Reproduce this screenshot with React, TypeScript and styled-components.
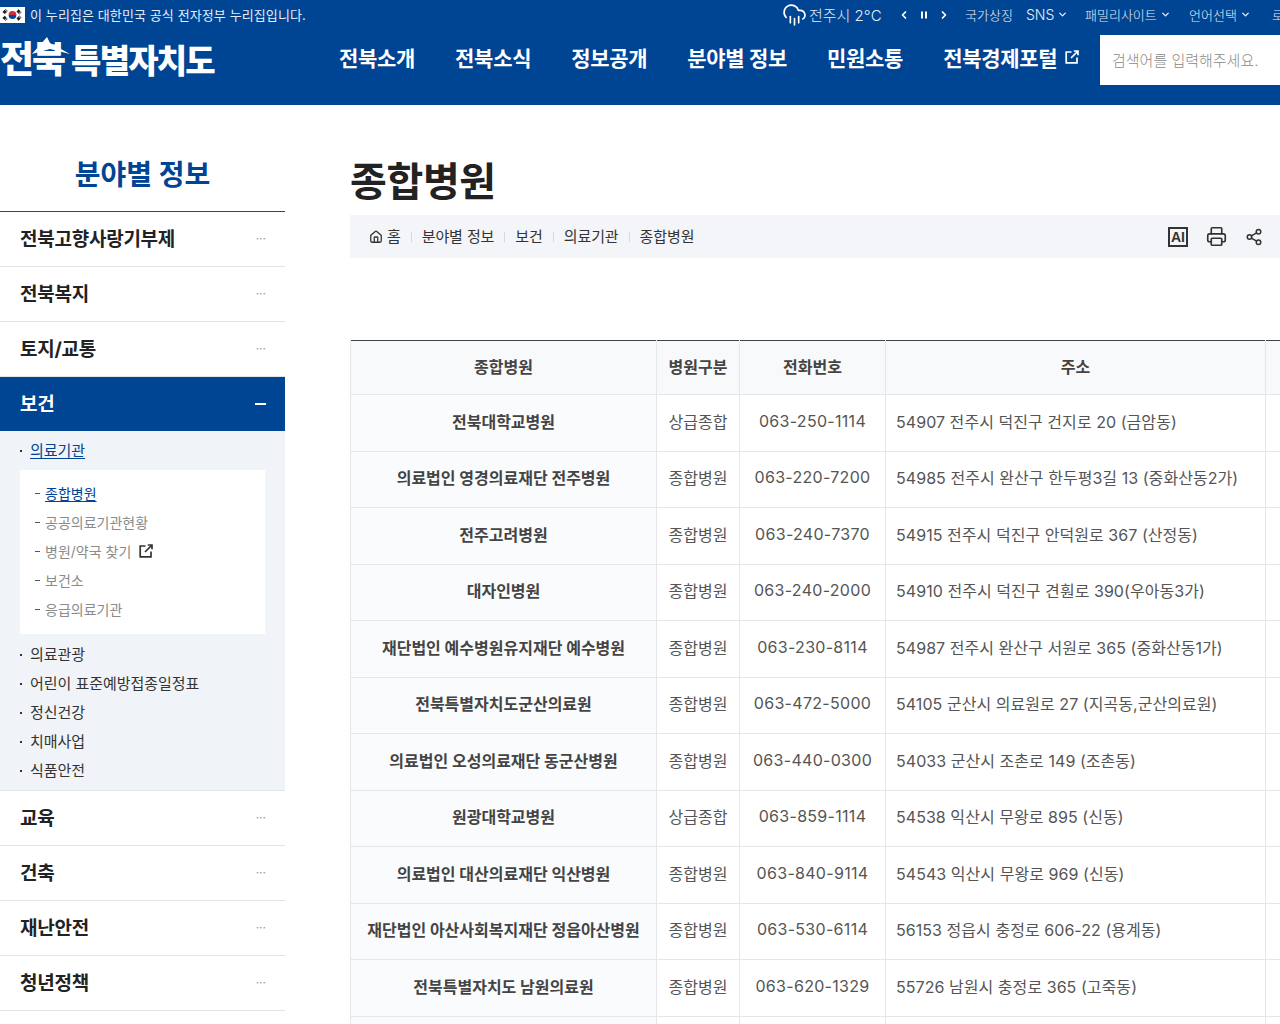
import React from "react";
import styled, { createGlobalStyle } from "styled-components";
import { ChevronLeft, ChevronRight, ChevronDown, CloudRain, Printer, Share2, House } from "lucide-react";

const Global = createGlobalStyle`
  html, body { margin: 0; padding: 0; width: 1280px; height: 1024px; overflow: hidden; background: #fff; }
  body { font-family: Inter, "Noto Sans CJK KR", "Noto Sans", sans-serif; color: #222; }
  * { box-sizing: border-box; }
  a { color: inherit; text-decoration: none; }
  ul { list-style: none; margin: 0; padding: 0; }
`;

const Page = styled.div`
  width: 1280px;
  height: 1024px;
  overflow: hidden;
`;
const Header = styled.header`
  height: 105px;
  background: #004494;
  color: #fff;
`;
const TopBar = styled.div`
  height: 35px;
  padding-bottom: 6px;
  display: flex;
  align-items: center;
  white-space: nowrap;
`;
const GovNotice = styled.div`
  display: flex;
  align-items: center;
  gap: 5px;
  font-size: 13px;
  letter-spacing: 0.1px;
  color: #e6edf7;
  width: 782px;
  flex: none;
`;
const Weather = styled.div`
  display: flex;
  align-items: center;
  gap: 2px;
  font-size: 15px;
  color: #e6edf7;
  width: 116px;
  flex: none;
  font-weight: 300;
`;
const Controls = styled.div`
  display: flex;
  align-items: center;
  gap: 8px;
  width: 67px;
  flex: none;
`;
const TopLink = styled.a<{ $w: number; $large?: boolean }>`
  display: flex;
  align-items: center;
  gap: 3px;
  width: ${(p) => p.$w}px;
  flex: none;
  font-size: ${(p) => (p.$large ? 14 : 13)}px;
  color: #e6edf7;
  font-weight: 300;
`;
const MainBar = styled.div`
  height: 70px;
  display: flex;
  align-items: flex-start;
`;
const Logo = styled.a`
  position: relative;
  display: flex;
  align-items: baseline;
  width: 339px;
  flex: none;
  height: 50px;
  font-weight: 900;
  color: #fff;
  white-space: nowrap;
`;
const LogoBig = styled.span`
  font-size: 37px;
  line-height: 50px;
  letter-spacing: -2px;
  margin-right: 7px;
`;
const LogoRest = styled.span`
  font-size: 33px;
  line-height: 50px;
  letter-spacing: -1.8px;
`;
const LogoWing = styled.svg`
  position: absolute;
  left: 32px;
  top: 2px;
`;
const Nav = styled.nav`
  display: flex;
  gap: 40px;
  width: 761px;
  flex: none;
  height: 50px;
  padding-bottom: 6px;
  align-items: center;
`;
const NavItem = styled.a`
  display: flex;
  align-items: center;
  gap: 8px;
  font-size: 21px;
  font-weight: 700;
  white-space: nowrap;
  letter-spacing: -0.3px;
`;
const Search = styled.div`
  width: 180px;
  height: 50px;
  flex: none;
  background: #fff;
  color: #8a8a8a;
  font-size: 15px;
  display: flex;
  align-items: center;
  padding: 0 0 2px 12px;
  font-weight: 300;
  white-space: nowrap;
`;
const Body = styled.div`
  display: flex;
  gap: 65px;
`;
const Side = styled.aside`
  width: 285px;
  flex: none;
`;
const SideTitle = styled.h2`
  margin: 0;
  height: 107px;
  border-bottom: 1px solid #444;
  display: flex;
  align-items: center;
  justify-content: center;
  padding-top: 29px;
  font-size: 28px;
  font-weight: 700;
  color: #004494;
`;
const SideItem = styled.a<{ $active?: boolean }>`
  display: flex;
  align-items: center;
  justify-content: space-between;
  height: ${(p) => (p.$active ? 54 : 55)}px;
  padding: 0 19px 4px 20px;
  font-size: 19px;
  font-weight: 700;
  letter-spacing: -0.25px;
  color: ${(p) => (p.$active ? "#fff" : "#222")};
  background: ${(p) => (p.$active ? "#004494" : "#fff")};
  border-bottom: ${(p) => (p.$active ? "none" : "1px solid #e4e4e4")};
`;
const Dots = styled.span`
  margin-top: 4px;
  font-size: 12px;
  font-weight: 400;
  color: #999;
  letter-spacing: 0;
  line-height: 1;
`;
const Minus = styled.span`
  margin-top: 4px;
  width: 11px;
  height: 2px;
  background: #fff;
`;
const SubArea = styled.div`
  background: #f0f3f8;
  height: 360px;
  padding: 4px 20px 0;
  border-bottom: 1px solid #e4e4e4;
`;
const SubLink = styled.a<{ $current?: boolean }>`
  display: flex;
  align-items: center;
  height: 29px;
  font-size: 15px;
  color: #333;
  gap: 7px;
  letter-spacing: -0.05px;
  &::before {
    content: "";
    width: 2px;
    height: 2px;
    background: #333;
    flex: none;
    margin: 2px 1px 0 0;
  }
  span {
    color: ${(p) => (p.$current ? "#004494" : "#333")};
    text-decoration: ${(p) => (p.$current ? "underline" : "none")};
    text-underline-offset: 2px;
  }
`;
const SubBox = styled.ul`
  background: #fff;
  margin: 6px 0 5px;
  padding: 8px 15px 11px;
  height: 164px;
`;
const SubBoxItem = styled.li<{ $current?: boolean }>`
  display: flex;
  align-items: center;
  height: 29px;
  font-size: 14px;
  color: ${(p) => (p.$current ? "#004494" : "#8b8b8b")};
  letter-spacing: 0;
  &::before {
    content: "";
    width: 5px;
    height: 1px;
    background: #555;
    margin: 2px 5px 0 0;
    flex: none;
  }
  span {
    text-decoration: ${(p) => (p.$current ? "underline" : "none")};
    text-underline-offset: 2px;
  }
  svg {
    margin-left: 8px;
  }
`;
const Main = styled.main`
  flex: 1;
  min-width: 0;
`;
const Title = styled.h1`
  margin: 0;
  height: 110px;
  padding-top: 47px;
  font-size: 40px;
  line-height: 60px;
  font-weight: 700;
  letter-spacing: -0.35px;
  color: #222;
`;
const Crumbs = styled.div`
  height: 43px;
  background: #f4f5f8;
  display: flex;
  align-items: center;
  justify-content: space-between;
  padding: 0 17px 0 19px;
  margin-bottom: 82px;
`;
const CrumbList = styled.ol`
  display: flex;
  align-items: center;
  list-style: none;
  margin: 0;
  padding: 0 0 3px;
  font-size: 15px;
  letter-spacing: -0.1px;
  color: #333;
`;
const Crumb = styled.li`
  display: flex;
  align-items: center;
  & + &::before {
    content: "";
    width: 1px;
    height: 10px;
    background: #d5d8de;
    margin: 4px 10px 0;
  }
  svg {
    margin: 3px 4px 0 0;
  }
`;
const Tools = styled.div`
  display: flex;
  align-items: center;
  gap: 18px;
  color: #333;
`;
const AiBadge = styled.span`
  width: 20px;
  height: 20px;
  border: 2px solid #333;
  font-size: 14px;
  font-weight: 700;
  display: flex;
  align-items: center;
  justify-content: center;
  line-height: 1;
  font-family: "Liberation Sans", sans-serif;
`;
const Table = styled.table`
  border-collapse: collapse;
  table-layout: fixed;
  width: 1000px;
  border-top: 1px solid #444;
`;
const Th = styled.th`
  height: 54px;
  background: #f8f9fb;
  font-size: 16px;
  font-weight: 700;
  color: #444;
  border-right: 1px solid #e4e6ea;
  border-bottom: 1px solid #e4e6ea;
  border-left: 1px solid #e4e6ea;
  padding: 0 0 4px;
`;
const Td = styled.td<{ $head?: boolean; $left?: boolean; $num?: boolean }>`
  height: 56.5px;
  padding: ${(p) => (p.$left ? "0 0 4px 10px" : "0 0 4px")};
  font-size: 16px;
  text-align: ${(p) => (p.$left ? "left" : "center")};
  font-weight: ${(p) => (p.$head ? 700 : 400)};
  color: ${(p) => (p.$head ? "#444" : "#555")};
  background: ${(p) => (p.$head ? "#fafbfc" : "#fff")};
  border: 1px solid #e4e6ea;
  white-space: nowrap;
  letter-spacing: ${(p) => (p.$num ? "0.3px" : p.$left ? "0.05px" : "0")};
`;

const rows = [
  ["전북대학교병원", "상급종합", "063-250-1114", "54907 전주시 덕진구 건지로 20 (금암동)"],
  ["의료법인 영경의료재단 전주병원", "종합병원", "063-220-7200", "54985 전주시 완산구 한두평3길 13 (중화산동2가)"],
  ["전주고려병원", "종합병원", "063-240-7370", "54915 전주시 덕진구 안덕원로 367 (산정동)"],
  ["대자인병원", "종합병원", "063-240-2000", "54910 전주시 덕진구 견훤로 390(우아동3가)"],
  ["재단법인 예수병원유지재단 예수병원", "종합병원", "063-230-8114", "54987 전주시 완산구 서원로 365 (중화산동1가)"],
  ["전북특별자치도군산의료원", "종합병원", "063-472-5000", "54105 군산시 의료원로 27 (지곡동,군산의료원)"],
  ["의료법인 오성의료재단 동군산병원", "종합병원", "063-440-0300", "54033 군산시 조촌로 149 (조촌동)"],
  ["원광대학교병원", "상급종합", "063-859-1114", "54538 익산시 무왕로 895 (신동)"],
  ["의료법인 대산의료재단 익산병원", "종합병원", "063-840-9114", "54543 익산시 무왕로 969 (신동)"],
  ["재단법인 아산사회복지재단 정읍아산병원", "종합병원", "063-530-6114", "56153 정읍시 충정로 606-22 (용계동)"],
  ["전북특별자치도 남원의료원", "종합병원", "063-620-1329", "55726 남원시 충정로 365 (고죽동)"],
  ["", "", "", ""],
];

const Flag = () => (
  <svg width="25" height="16" viewBox="0 0 25 16">
    <rect width="25" height="16" fill="#fff" />
    <path d="M8.6 8a3.9 3.9 0 0 1 7.8 0z" fill="#cd2e3a" />
    <path d="M8.6 8a3.9 3.9 0 0 0 7.8 0z" fill="#0047a0" />
    <g stroke="#222" strokeWidth="1.6" strokeDasharray="3 .6">
      <path d="M3 5.5l3-3M4.2 6.5l3-3" />
      <path d="M18 2.8l3 3M17 4l3 3" />
      <path d="M3 10.4l3 3M4.2 9.4l3 3" />
      <path d="M18 13.2l3-3M17 12l3-3" />
    </g>
  </svg>
);

const PauseBars = () => (
  <svg width="12" height="12" viewBox="0 0 12 12" fill="#fff">
    <rect x="3" y="2.5" width="2" height="7" />
    <rect x="7" y="2.5" width="2" height="7" />
  </svg>
);

const ExternalIcon = ({ size, color }: { size: number; color: string }) => (
  <svg width={size} height={size} viewBox="0 0 14 14" fill="none" stroke={color} strokeWidth="1.7">
    <path d="M6.5 2H1.2v10.8H12V7.5" />
    <path d="M6 8l6.5-6.5M8.8 1h4.2v4.2" />
  </svg>
);

const sideTop = ["전북고향사랑기부제", "전북복지", "토지/교통"];
const sideBottom = ["교육", "건축", "재난안전", "청년정책"];

export default function App() {
  return (
    <Page>
      <Global />
      <Header>
        <TopBar>
          <GovNotice>
            <Flag />
            이 누리집은 대한민국 공식 전자정부 누리집입니다.
          </GovNotice>
          <Weather>
            <CloudRain size={25} strokeWidth={1.6} color="#fff" />
            전주시 2°C
          </Weather>
          <Controls>
            <ChevronLeft size={12} strokeWidth={3.5} />
            <PauseBars />
            <ChevronRight size={12} strokeWidth={3.5} />
          </Controls>
          <TopLink $w={61}>국가상징</TopLink>
          <TopLink $w={59} $large>SNS <ChevronDown size={11} strokeWidth={3} /></TopLink>
          <TopLink $w={104}>패밀리사이트 <ChevronDown size={11} strokeWidth={3} /></TopLink>
          <TopLink $w={83}>언어선택 <ChevronDown size={11} strokeWidth={3} /></TopLink>
          <TopLink $w={40}>로그인</TopLink>
        </TopBar>
        <MainBar>
          <Logo>
            <LogoBig>전북</LogoBig>
            <LogoRest>특별자치도</LogoRest>
            <LogoWing width="40" height="18" viewBox="0 0 40 18">
              <path d="M0 17L15 0l3 6 20 11-20-5z" fill="#fff" />
            </LogoWing>
          </Logo>
          <Nav>
            <NavItem>전북소개</NavItem>
            <NavItem>전북소식</NavItem>
            <NavItem>정보공개</NavItem>
            <NavItem>분야별 정보</NavItem>
            <NavItem>민원소통</NavItem>
            <NavItem>전북경제포털 <ExternalIcon size={14} color="#fff" /></NavItem>
          </Nav>
          <Search>검색어를 입력해주세요.</Search>
        </MainBar>
      </Header>
      <Body>
        <Side>
          <SideTitle>분야별 정보</SideTitle>
          {sideTop.map((t) => (
            <SideItem key={t}>{t}<Dots>···</Dots></SideItem>
          ))}
          <SideItem $active>보건<Minus /></SideItem>
          <SubArea>
            <SubLink $current><span>의료기관</span></SubLink>
            <SubBox>
              <SubBoxItem $current><span>종합병원</span></SubBoxItem>
              <SubBoxItem>공공의료기관현황</SubBoxItem>
              <SubBoxItem>병원/약국 찾기 <ExternalIcon size={14} color="#333" /></SubBoxItem>
              <SubBoxItem>보건소</SubBoxItem>
              <SubBoxItem>응급의료기관</SubBoxItem>
            </SubBox>
            <SubLink><span>의료관광</span></SubLink>
            <SubLink><span>어린이 표준예방접종일정표</span></SubLink>
            <SubLink><span>정신건강</span></SubLink>
            <SubLink><span>치매사업</span></SubLink>
            <SubLink><span>식품안전</span></SubLink>
          </SubArea>
          {sideBottom.map((t) => (
            <SideItem key={t}>{t}<Dots>···</Dots></SideItem>
          ))}
        </Side>
        <Main>
          <Title>종합병원</Title>
          <Crumbs>
            <CrumbList>
              <Crumb><House size={14} strokeWidth={2.2} />홈</Crumb>
              <Crumb>분야별 정보</Crumb>
              <Crumb>보건</Crumb>
              <Crumb>의료기관</Crumb>
              <Crumb>종합병원</Crumb>
            </CrumbList>
            <Tools>
              <AiBadge>AI</AiBadge>
              <Printer size={21} strokeWidth={1.9} />
              <Share2 size={18} strokeWidth={2} />
            </Tools>
          </Crumbs>
          <Table>
            <colgroup>
              <col width="306" />
              <col width="83" />
              <col width="146" />
              <col width="380" />
              <col width="85" />
            </colgroup>
            <thead>
              <tr>
                <Th>종합병원</Th>
                <Th>병원구분</Th>
                <Th>전화번호</Th>
                <Th>주소</Th>
                <Th />
              </tr>
            </thead>
            <tbody>
              {rows.map((r, i) => (
                <tr key={i}>
                  <Td $head>{r[0]}</Td>
                  <Td>{r[1]}</Td>
                  <Td $num>{r[2]}</Td>
                  <Td $left>{r[3]}</Td>
                  <Td />
                </tr>
              ))}
            </tbody>
          </Table>
        </Main>
      </Body>
    </Page>
  );
}
